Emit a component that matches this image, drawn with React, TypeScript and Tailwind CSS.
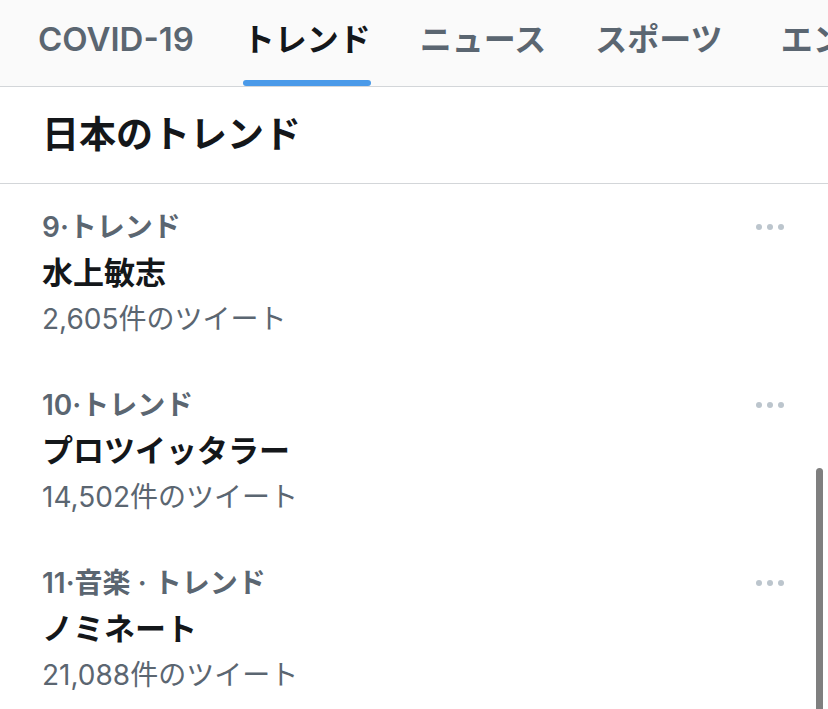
import React from "react";

const FONT = 'Inter, "Noto Sans CJK JP", sans-serif';

const tabs = ["COVID-19", "トレンド", "ニュース", "スポーツ", "エンターテイメント"];

const trends = [
  { label: "9·トレンド", title: "水上敏志", count: "2,605件のツイート" },
  { label: "10·トレンド", title: "プロツイッタラー", count: "14,502件のツイート" },
  { label: "11·音楽 · トレンド", title: "ノミネート", count: "21,088件のツイート" },
];

function Dots() {
  return (
    <div className="flex h-[46px] items-center gap-[4.5px]">
      <span className="block h-[6.5px] w-[6.5px] rounded-full bg-[#bcc5cd]" />
      <span className="block h-[6.5px] w-[6.5px] rounded-full bg-[#bcc5cd]" />
      <span className="block h-[6.5px] w-[6.5px] rounded-full bg-[#bcc5cd]" />
    </div>
  );
}

export default function App() {
  return (
    <div
      className="relative h-[709px] w-[828px] overflow-hidden bg-white"
      style={{ fontFamily: FONT }}
    >
      <div className="flex h-[87px] gap-[49px] overflow-hidden whitespace-nowrap border-b border-[#d3d6d9] bg-[#fafafa] pl-[38px]">
        {tabs.map((t, i) => {
          const active = i === 1;
          return (
            <div key={t} className={"flex shrink-0 flex-col " + (i === 4 ? "ml-[9px]" : "")}>
              <div
                className={
                  "flex flex-1 items-center " +
                  (i === 0 ? "text-[33px] " : "text-[32px] ") +
                  (active
                    ? "font-bold text-[#14171a]"
                    : "font-semibold text-[#5b6671]")
                }
              >
                {t}
              </div>
              <div
                className={
                  "h-[6px] rounded-full " + (active ? "bg-[#4a9ae9]" : "bg-transparent")
                }
              />
            </div>
          );
        })}
      </div>

      <div className="flex h-[97px] items-center border-b border-[#d3d6d9] px-[42px]">
        <h2 className="text-[37px] font-bold text-[#14171a]">日本のトレンド</h2>
      </div>

      <div className="flex flex-col">
        {trends.map((tr) => (
          <div key={tr.title} className="flex justify-between py-[20px] pl-[42px] pr-[44px]">
            <div className="flex flex-col">
              <div className="text-[28px] font-semibold leading-[46px] text-[#5b6671]">
                {tr.label}
              </div>
              <div className="text-[31px] font-bold leading-[46px] text-[#14171a]">
                {tr.title}
              </div>
              <div className="text-[28px] leading-[46px] text-[#5b6671]">{tr.count}</div>
            </div>
            <Dots />
          </div>
        ))}
      </div>

      <div className="absolute bottom-0 right-[5px] top-[468px] w-[7px] rounded-t-full bg-[#7f7f7f]" />
    </div>
  );
}
